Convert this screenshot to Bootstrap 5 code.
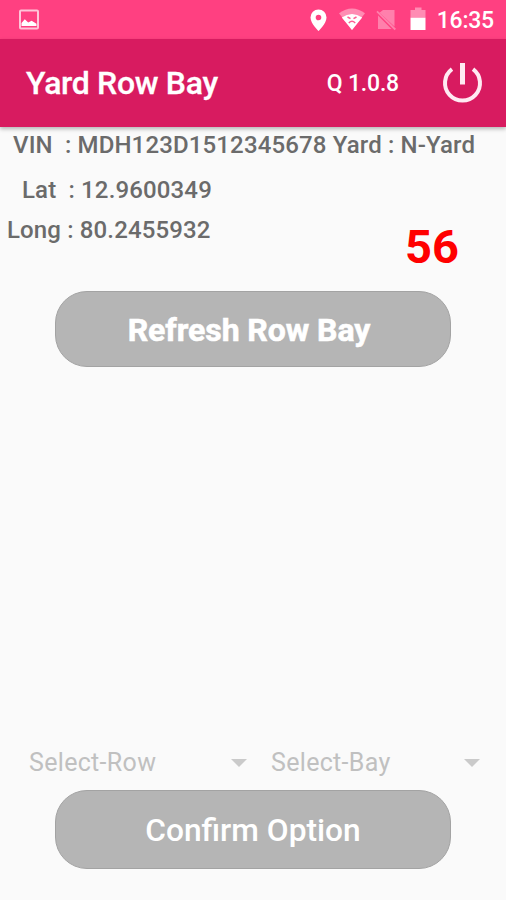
<!DOCTYPE html>
<html lang="en">
<head>
<meta charset="utf-8">
<meta name="viewport" content="width=device-width, initial-scale=1">
<title>Yard Row Bay</title>
<link href="https://cdn.jsdelivr.net/npm/bootstrap@5.3.0/dist/css/bootstrap.min.css" rel="stylesheet">
<style>
  body { font-family: Roboto, "Liberation Sans", sans-serif; background: #fafafa; height: 900px; overflow: hidden; }
  svg { display: block; flex: none; }
  .status-bar { height: 39px; background: #ff4081; padding: 0 12px 0 18px; font-size: 23px; line-height: 39px; }
  .status-icons { margin-right: 11px; }
  .clock { letter-spacing: -.2px; padding-top: 2px; }
  .app-bar { height: 88px; background: #d81b60; padding: 0 22px 0 26px; box-shadow: 0 2px 4px rgba(0,0,0,.28); }
  .app-title { font-size: 32px; line-height: 40px; letter-spacing: -.32px; -webkit-text-stroke: .3px #fff; }
  .app-version { font-size: 23px; line-height: 30px; margin-right: 43px; letter-spacing: -.2px; padding-top: 2px; }
  .info { font-size: 24px; color: #6b6b6b; height: 164px; letter-spacing: .14px; }
  .info-line { white-space: pre; line-height: 37px; }
  .info-vin { padding-left: 13px; }
  .info-lat { padding-left: 22px; line-height: 40px; margin-top: 6px; }
  .info-long { padding-left: 7px; line-height: 41px; }
  .counter { font-size: 47px; line-height: 56px; color: #f00; padding: 55px 47px 0 0; letter-spacing: 0; }
  .wide-btn, .wide-btn:disabled { width: 396px; height: 76px; border-radius: 32px; background: #b5b5b5; border: 1.500px solid #a3a3a3; color: #fff; opacity: 1; font-size: 32px; padding: 0; }
  .wide-btn.refresh { padding: 2px 8px 0 0; letter-spacing: -.07px; -webkit-text-stroke: .6px #fff; }
  .wide-btn.confirm { height: 79px; margin-bottom: 31px; padding-top: 2px; font-size: 31.700px; }
  .pick { font-size: 25px; line-height: 30px; color: #c0c0c0; letter-spacing: .32px; }
  .pickers { padding: 0 26px 0 29px; margin-bottom: 12px; }
  .pick-row { width: 218px; margin-right: 24px; }
</style>
<script src="https://cdn.jsdelivr.net/npm/bootstrap@5.3.0/dist/js/bootstrap.bundle.min.js"></script>
</head>
<body class="d-flex flex-column">
  <div class="status-bar d-flex align-items-center text-white fw-medium">
    <svg width="22" height="22" viewBox="0 0 22 22"><rect x="2" y="1.500" width="18" height="18" rx="1" fill="none" stroke="#ffc4d8" stroke-width="2"/><path d="M3.500 17v-3l3.300-3.800 3.400 3.200 3.400-1.600 4.900 3V17z" fill="#fff"/></svg>
    <div class="status-icons d-flex align-items-center ms-auto">
      <svg width="116" height="26" viewBox="310 7 116 26">
        <path d="M318.500 9.500a8 8 0 0 0-8 8c0 6 8 13.500 8 13.500s8-7.500 8-13.500a8 8 0 0 0-8-8zm0 5.200a2.800 2.800 0 1 1 0 5.600 2.800 2.800 0 0 1 0-5.600z" fill="#fff" fill-rule="evenodd"/>
        <path d="M352 30 339 13.200q13-9.500 26 0z" fill="#ff8cb3"/>
        <path d="M352 30 341.800 17.500q10.200-7 20.400 0z" fill="#fff"/>
        <path d="M347.500 17l3 1.700M356.500 17l-3 1.700M348.800 23q3.200-3.400 6.400 0" fill="none" stroke="#ff5c93" stroke-width="1.500"/>
        <path d="M383 10h11.500v16.500L379.500 12.700zM378 15.500v13.500h13.500z" fill="#ff80ac"/>
        <path d="M377 11.300 395.300 29.500" stroke="#ff80ac" stroke-width="1.800"/>
        <path d="M415 7.500h6.500v2.500h4V18h-15v-8h4.500z" fill="#ff8cb3"/>
        <path d="M410.500 17.800h15V30h-15z" fill="#fff"/>
      </svg>
    </div>
    <span class="clock">16:35</span>
  </div>
  <header class="app-bar d-flex align-items-center text-white fw-medium">
    <h1 class="app-title fw-medium mb-0 me-auto">Yard Row Bay</h1>
    <span class="app-version">Q 1.0.8</span>
    <svg width="42" height="42" viewBox="442 62.500 42 42" fill="none" stroke="#ffeaf2" stroke-width="4"><path d="M462.500 63.500v21.500" stroke-width="5"/><path d="M452 69.600a17.500 17.500 0 1 0 21 0"/></svg>
  </header>
  <main class="flex-grow-1 d-flex flex-column align-items-center">
    <section class="info w-100 fw-medium">
      <div class="info-line info-vin">VIN  : MDH123D1512345678 Yard : N-Yard</div>
      <div class="d-flex justify-content-between">
        <div>
          <div class="info-line info-lat">Lat  : 12.9600349</div>
          <div class="info-line info-long">Long : 80.2455932</div>
        </div>
        <div class="counter fw-bold">56</div>
      </div>
    </section>
    <button class="btn wide-btn refresh fw-bold" type="button" disabled>Refresh Row Bay</button>
    <div class="pickers pick w-100 d-flex mt-auto">
      <div class="pick-row d-flex align-items-center justify-content-between"><span>Select-Row</span><svg width="16" height="9" viewBox="0 0 16 9"><path d="M0 0h16L8 8z" fill="#cacaca"/></svg></div>
      <div class="flex-grow-1 d-flex align-items-center justify-content-between"><span>Select-Bay</span><svg width="16" height="9" viewBox="0 0 16 9"><path d="M0 0h16L8 8z" fill="#cacaca"/></svg></div>
    </div>
    <button class="btn wide-btn confirm fw-medium" type="button" disabled>Confirm Option</button>
  </main>
</body>
</html>
